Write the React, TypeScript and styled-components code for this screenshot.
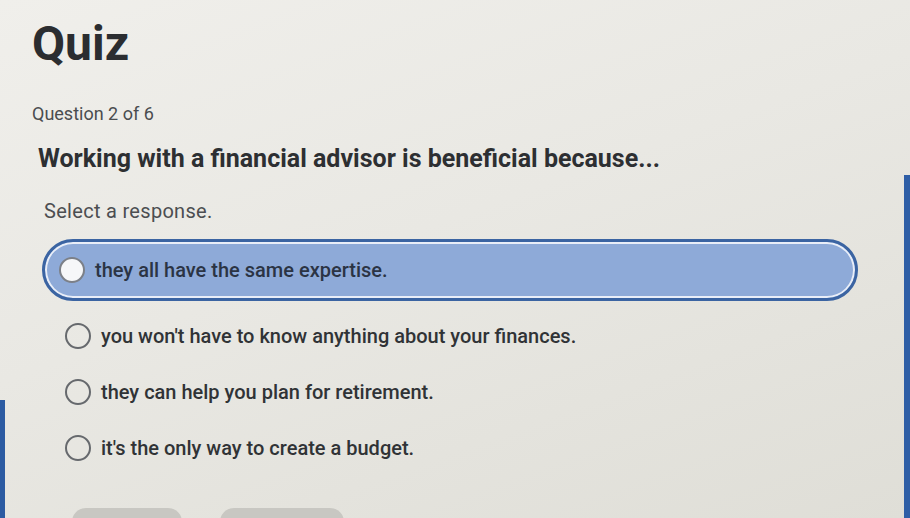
import React from "react";
import styled, { createGlobalStyle } from "styled-components";

const Global = createGlobalStyle`
  html, body { margin: 0; padding: 0; }
  body { font-family: Roboto, "Liberation Sans", Arial, sans-serif; }
`;

const Page = styled.div`
  position: relative;
  width: 910px;
  height: 518px;
  overflow: hidden;
  box-sizing: border-box;
  padding: 16px 0 0 32px;
  background:
    linear-gradient(to bottom, transparent 175px, #2e5ea6 175px) right top / 6px 100% no-repeat,
    linear-gradient(to bottom, transparent 400px, #2c5ba2 400px) left top / 5px 100% no-repeat,
    linear-gradient(160deg, #f0efeb 0%, #e9e8e3 45%, #dfded7 100%);
  display: flex;
  flex-direction: column;
  color: #2f3235;
`;

const Title = styled.h1`
  margin: 0;
  font-size: 48px;
  line-height: 56px;
  font-weight: 700;
  color: #2b2d30;
`;

const Counter = styled.div`
  margin-top: 31px;
  font-size: 18px;
  line-height: 21px;
  color: #4a4c4f;
`;

const Question = styled.h2`
  margin: 21px 0 0 6px;
  font-size: 25px;
  line-height: 28px;
  font-weight: 700;
  color: #2d2f32;
`;

const Prompt = styled.div`
  margin: 26px 0 0 12px;
  font-size: 20px;
  line-height: 24px;
  color: #4c4e51;
  letter-spacing: 0.3px;
`;

const Options = styled.div`
  margin: 16px 0 0 10px;
  width: 816px;
  display: flex;
  flex-direction: column;
  gap: 16px;
`;

const Option = styled.div<{ $selected?: boolean }>`
  box-sizing: border-box;
  height: ${(p) => (p.$selected ? "62px" : "40px")};
  margin-bottom: ${(p) => (p.$selected ? "-1px" : "0")};
  display: flex;
  align-items: center;
  gap: 10px;
  padding-left: ${(p) => (p.$selected ? "14px" : "20px")};
  border-radius: 31px;
  border: 3px solid ${(p) => (p.$selected ? "#3b64a2" : "transparent")};
  background: ${(p) => (p.$selected ? "#8eaad8" : "transparent")};
  box-shadow: ${(p) => (p.$selected ? "inset 0 0 0 2px #e9eef8" : "none")};
`;

const Radio = styled.span<{ $selected?: boolean }>`
  flex: none;
  box-sizing: border-box;
  width: 26px;
  height: 26px;
  border-radius: 50%;
  border: 2px solid ${(p) => (p.$selected ? "#7c8088" : "#66696d")};
  background: ${(p) => (p.$selected ? "#f6f7f9" : "transparent")};
`;

const Label = styled.span<{ $selected?: boolean }>`
  font-size: 20px;
  line-height: 24px;
  font-weight: 500;
  color: ${(p) => (p.$selected ? "#2b3444" : "#303336")};
`;

const Buttons = styled.div`
  margin: 40px 0 0 40px;
  display: flex;
  gap: 38px;
`;

const Button = styled.div<{ $w: number }>`
  width: ${(p) => p.$w}px;
  height: 40px;
  border-radius: 14px;
  background: #c8c7c2;
`;

const answers = [
  "they all have the same expertise.",
  "you won't have to know anything about your finances.",
  "they can help you plan for retirement.",
  "it's the only way to create a budget.",
];

export default function App() {
  return (
    <>
      <Global />
      <Page>
        <Title>Quiz</Title>
        <Counter>Question 2 of 6</Counter>
        <Question>Working with a financial advisor is beneficial because...</Question>
        <Prompt>Select a response.</Prompt>
        <Options>
          {answers.map((a, i) => (
            <Option key={a} $selected={i === 0}>
              <Radio $selected={i === 0} />
              <Label $selected={i === 0}>{a}</Label>
            </Option>
          ))}
        </Options>
        <Buttons>
          <Button $w={110} />
          <Button $w={124} />
        </Buttons>
      </Page>
    </>
  );
}
